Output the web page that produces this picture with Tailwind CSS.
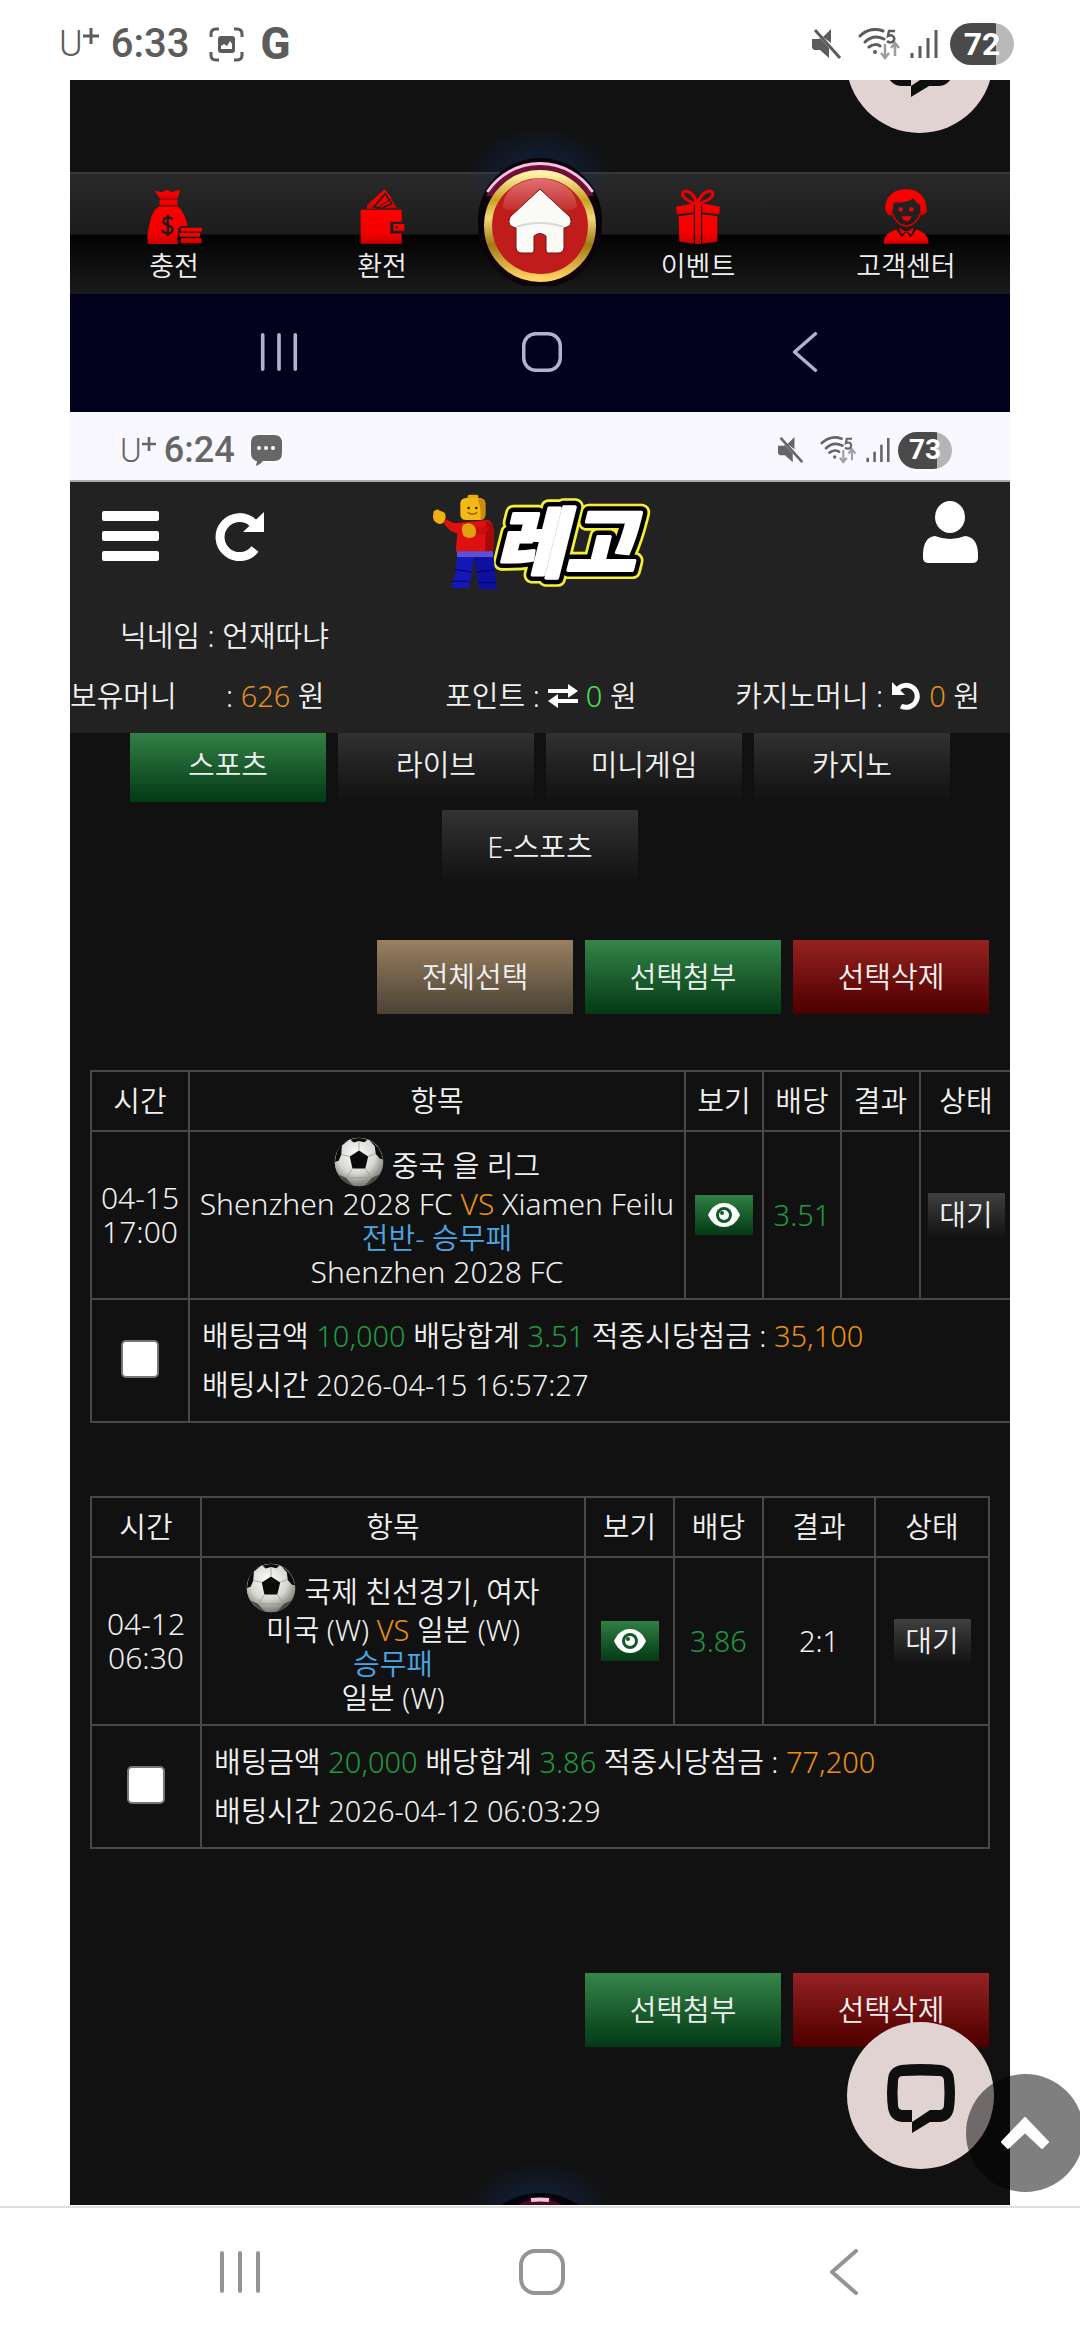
<!DOCTYPE html>
<html lang="ko">
  <head>
    <meta charset="UTF-8" />
    <title>베팅내역</title>
    <meta name="viewport" content="width=device-width, initial-scale=1.0" />
    <script src="https://cdn.jsdelivr.net/npm/@tailwindcss/browser@4"></script>
  </head>
  <body
    class="relative flex min-h-screen flex-col overflow-x-hidden bg-white font-['Noto_Sans','Noto_Sans_CJK_KR',sans-serif]"
  >
    <!-- Shared icons -->
    <svg class="absolute h-0 w-0">
      <defs>
        <linearGradient id="gold" x1="0" y1="0" x2="0" y2="1">
          <stop offset="0" stop-color="#fff3a8" />
          <stop offset="0.25" stop-color="#c9a022" />
          <stop offset="0.42" stop-color="#f3d878" />
          <stop offset="0.68" stop-color="#a07a14" />
          <stop offset="1" stop-color="#ffd162" />
        </linearGradient>
        <linearGradient id="gloss" x1="0" y1="0" x2="0" y2="1">
          <stop offset="0" stop-color="#e27070" />
          <stop offset="1" stop-color="#c33030" />
        </linearGradient>
        <linearGradient id="redIcon" x1="0" y1="0" x2="0" y2="1">
          <stop offset="0" stop-color="#ff0000" />
          <stop offset="0.7" stop-color="#f20000" />
          <stop offset="1" stop-color="#cc0000" />
        </linearGradient>
        <radialGradient id="glow">
          <stop offset="0.4" stop-color="#12306e" stop-opacity="0.9" />
          <stop offset="1" stop-color="#12306e" stop-opacity="0" />
        </radialGradient>
        <radialGradient id="ballShade" cx="0.45" cy="0.35" r="0.65">
          <stop offset="0" stop-color="#ffffff" />
          <stop offset="0.6" stop-color="#d6d6d2" />
          <stop offset="1" stop-color="#77776f" />
        </radialGradient>
      </defs>
      <symbol id="mute" viewBox="0 0 30 30">
        <path d="M0 10h7l1-1L17 19v10L8 21H2L0 19zM11 8L19 0v14z" fill="currentColor" />
        <path d="M3 1L28 29" stroke="currentColor" stroke-width="3" fill="none" />
      </symbol>
      <symbol id="wifi" viewBox="0 0 44 32">
        <g fill="none" stroke="currentColor" stroke-width="3" stroke-linecap="round">
          <path d="M2 8C9 1 18 0 25 3M7 14C13 8 20 8 26 11M11 19C15 16 20 16 22 18" />
        </g>
        <circle cx="17" cy="24" r="2" fill="currentColor" />
        <path d="M37 3H31L30 8C34 6 37 9 36 12C35 15 31 15 29 13" fill="none" stroke="currentColor" stroke-width="2.5" />
        <path d="M27 16V29M23 25L27 30L31 25M37 28V16M33 20L37 15L41 20" fill="none" stroke="currentColor" stroke-width="2.5" opacity="0.6" />
      </symbol>
      <symbol id="signal" viewBox="0 0 28 30">
        <path d="M2 24V29M10 17V29M18 9V29M26 1V29" stroke="currentColor" stroke-width="3" />
      </symbol>
      <symbol id="ball" viewBox="36 24 152 152">
        <circle cx="112" cy="100" r="74" fill="url(#ballShade)" />
        <g fill="#0b0b0b">
          <path d="M112 65L140 83L131 120L92 120L84 83Z" />
          <path d="M86 32Q112 22 138 32L128 40L112 36L96 41Z" />
          <path d="M60 50L80 34L64 42Q42 60 39 100L50 96L58 78Z" />
          <path d="M144 34Q176 50 185 92L176 90L163 76L160 52Z" />
        </g>
        <g fill="#4a4a44">
          <path d="M50 138L72 148L94 172Q66 166 50 138Z" />
          <path d="M174 138L152 148L130 172Q158 166 174 138Z" />
        </g>
        <path
          d="M112 65V37M140 83L163 74M131 120L150 148M92 120L74 148M84 83L58 77M78 148H146"
          fill="none"
          stroke="#8d8d88"
          stroke-width="2"
        />
      </symbol>
      <symbol id="eye" viewBox="0 0 32 24">
        <path d="M0 12C4 3 10 0 16 0S28 3 32 12C28 21 22 24 16 24S4 21 0 12Z" fill="#fff" />
        <circle cx="16" cy="12" r="8" fill="#135a29" />
        <circle cx="16" cy="12" r="5" fill="#fff" />
        <circle cx="14" cy="10" r="2" fill="#135a29" />
      </symbol>
      <symbol id="chat" viewBox="0 0 70 70">
        <path
          d="M15 2Q35 0 55 2Q67 4 68 16Q70 30 68 45Q66 58 54 59H44L26 70V59H16Q4 58 2 45Q0 30 2 16Q3 4 15 2Z"
          fill="#0f0f0f"
        />
        <path d="M17 13Q35 12 53 13Q58 13 58 18Q59 30 58 42Q58 47 53 47H44L26 59V47H17Q12 47 12 42Q11 30 12 18Q12 13 17 13Z" fill="#e1d3d2" />
      </symbol>
      <symbol id="recents" viewBox="0 0 42 44">
        <path d="M3 3V41M21 3V41M39 3V41" stroke="currentColor" stroke-width="4" stroke-linecap="round" />
      </symbol>
      <symbol id="homeKey" viewBox="0 0 46 46">
        <rect x="2" y="2" width="42" height="42" rx="14" fill="none" stroke="currentColor" stroke-width="4" />
      </symbol>
      <symbol id="backKey" viewBox="0 0 30 46">
        <path d="M27 2L3 23L27 44" fill="none" stroke="currentColor" stroke-width="4" stroke-linecap="round" stroke-linejoin="round" />
      </symbol>
    </svg>

    <!-- Phone status bar -->
    <div class="flex h-20 items-center justify-between pt-2 pr-[66px] pl-[59px] font-[Roboto] text-[#5c5c5c]">
      <div class="flex items-center">
        <span class="text-[36px] leading-none font-light">U</span>
        <svg class="mb-4 h-4 w-4" viewBox="0 0 16 16" fill="none" stroke="currentColor" stroke-width="3"><path d="M8 0v16M0 8h16" /></svg>
        <span class="ml-3 text-[40px] leading-none font-medium">6:33</span>
        <svg class="ml-5 h-[35px] w-[35px]" viewBox="0 0 35 35" fill="none" stroke="currentColor" stroke-width="3">
          <path d="M2 10V7q0-5 5-5h3M25 2h3q5 0 5 5v3M33 25v3q0 5-5 5h-3M10 33H7q-5 0-5-5v-3" />
          <path d="M12 9h11q3 0 3 3v11q0 3-3 3H12q-3 0-3-3V12q0-3 3-3z" fill="currentColor" stroke="none" />
          <path d="M12 22v-3l3-2 3 2 3-5 2 3v5z" fill="#fff" stroke="none" />
        </svg>
        <span class="ml-4 text-[44px] leading-none font-extrabold">G</span>
      </div>
      <div class="flex items-center">
        <svg class="h-[30px] w-[30px]"><use href="#mute" /></svg>
        <svg class="ml-4 h-8 w-11"><use href="#wifi" /></svg>
        <svg class="ml-2 h-[30px] w-7"><use href="#signal" /></svg>
        <div
          class="ml-3 flex h-[42px] w-16 items-center justify-center rounded-full bg-linear-to-r from-[#4a4a4a] from-72% to-[#b9b9b9] to-72% text-[32px] leading-none font-bold text-white"
        >
          72
        </div>
      </div>
    </div>

    <main class="flex-1 bg-white px-[70px]">
      <div class="relative h-full overflow-hidden bg-[#111] text-[29px] font-[350] text-[#f0f0f0]">
        <!-- Previous screen: menu bar -->
        <section class="relative overflow-hidden pt-23">
          <button
            class="absolute -top-[94px] right-[17px] flex h-[147px] w-[147px] items-center justify-center rounded-full bg-[#e1d3d2]"
            aria-label="채팅"
          >
            <svg class="mt-1 h-[70px] w-[70px]"><use href="#chat" /></svg>
          </button>
          <nav
            class="flex h-[122px] items-start border-t-2 border-[#383838] bg-[linear-gradient(#292929_0%,#1c1c1c_50%,#020202_51%,#1a1a1a_100%)] text-[27px]"
          >
            <a href="#" class="flex flex-1 flex-col items-center gap-[2px] pt-[15px]">
              <svg class="h-[55px] w-[57px]" viewBox="256 116 170 166" fill="url(#redIcon)">
                <path d="M281 121L302 126L318 119L333 125L358 118L350 146H298Z" />
                <path d="M296 148H350V166H296Z" />
                <path d="M294 169H352Q374 190 380 228H360Q352 232 352 242Q348 268 352 282H262Q254 262 266 222Q272 182 294 169Z" />
                <path d="M360 233H424V244H360zM356 248H418V260H356zM360 265H422V280H360z" />
                <path
                  d="M336 208Q330 200 320 202Q305 206 308 216Q312 224 322 226Q336 230 335 240Q332 252 318 250Q306 248 304 240M321 194V258"
                  fill="none"
                  stroke="#1c1c1c"
                  stroke-width="7"
                />
              </svg>
              충전
            </a>
            <a href="#" class="flex flex-1 flex-col items-center gap-[2px] pt-[15px]">
              <svg class="h-[55px] w-[47px]" viewBox="894 116 140 166" fill="url(#redIcon)">
                <path d="M970 117L918 164L916 176H940L992 143Z" />
                <path d="M972 118L1008 174H945L985 152Z" />
                <path d="M938 170L972 130L992 160L962 174Z" fill="none" stroke="#222" stroke-width="5" />
                <path d="M900 179H1022V215H988V250H1022V281H898V184Z" />
                <path d="M997 222H1030V243H997Z" />
                <circle cx="1007" cy="232" r="4" fill="#300" />
              </svg>
              환전
            </a>
            <a href="#" class="relative h-full w-[108px]" aria-label="홈">
              <svg class="absolute -top-12 left-1/2 h-[160px] w-[200px] -translate-x-1/2" viewBox="-100 -100 200 160">
                <ellipse cx="0" cy="-54" rx="74" ry="46" fill="url(#glow)" opacity="0.35" />
                <circle r="62" fill="#10040a" />
                <circle cy="-6" r="62" fill="#08040a" />
                <path d="M-54 -30A62 62 0 0 1 54 -30L46 -30A54 54 0 0 0 -46 -30Z" fill="#6d1038" />
                <path d="M-52 -35A63 63 0 0 1 52 -35" fill="none" stroke="#f6bfe0" stroke-width="3" stroke-linecap="round" />
                <circle r="52" fill="#c01c1c" stroke="url(#gold)" stroke-width="8" />
                <path d="M-37 -20Q-35 -44 0 -48Q35 -44 37 -20Q34 -14 22 -17Q0 -24 -22 -17Q-36 -14 -37 -20Z" fill="url(#gloss)" />
                <path
                  d="M0 -37L30 -9Q34 0 24 2V22Q23 27 18 27H8Q6 27 6 24V10Q0 5 -6 10V24Q-6 27 -8 27H-18Q-23 27 -24 22V2Q-34 0 -30 -9Z"
                  fill="#fafaf7"
                  stroke="#6a1414"
                  stroke-width="1"
                />
                <path d="M-24 1Q0 -7 24 1" fill="none" stroke="#d8d8d4" stroke-width="2" />
              </svg>
            </a>
            <a href="#" class="flex flex-1 flex-col items-center gap-[2px] pt-[15px]">
              <svg class="h-[55px] w-[46px]" viewBox="408 114 138 168" fill="url(#redIcon)">
                <path
                  d="M474 160Q440 150 430 134Q426 120 442 120Q464 124 474 160Q488 124 510 120Q526 120 522 134Q512 150 474 160"
                  fill="none"
                  stroke="#f00000"
                  stroke-width="9"
                />
                <path d="M410 168L464 158V186L412 192Z" />
                <path d="M490 158L544 168L542 192L490 186Z" />
                <path d="M418 197L464 191V281L420 274Z" />
                <path d="M490 191L536 197V274L490 281Z" />
                <path d="M468 160H486V282H468Z" />
              </svg>
              이벤트
            </a>
            <a href="#" class="flex flex-1 flex-col items-center gap-[2px] pt-[15px]">
              <svg class="h-[55px] w-[46px]" viewBox="1030 116 138 166" fill="url(#redIcon)">
                <path
                  d="M1036 168Q1044 118 1100 117Q1152 118 1160 168Q1166 190 1152 194L1142 196V164Q1128 158 1122 144Q1100 160 1062 156L1056 196Q1036 198 1036 168Z"
                />
                <path d="M1058 190Q1070 226 1100 228Q1130 226 1142 190" fill="none" stroke="#d00000" stroke-width="5" />
                <circle cx="1083" cy="178" r="7" />
                <circle cx="1115" cy="178" r="7" />
                <path d="M1086 198H1116Q1110 214 1100 213Q1090 212 1086 198Z" />
                <path d="M1032 281Q1030 250 1070 238L1086 262L1100 246L1114 262L1130 238Q1168 250 1167 281Z" />
                <path d="M1078 234L1100 246L1122 234L1116 254L1100 242L1086 254Z" />
              </svg>
              고객센터
            </a>
          </nav>
        </section>

        <div class="grid h-[118px] grid-cols-3 place-items-center bg-[#01011e] pr-[74px] pb-[2px] pl-[78px] text-[#b4b2c8]">
          <button aria-label="최근 앱"><svg class="h-10 w-[38px]"><use href="#recents" /></svg></button>
          <button aria-label="홈"><svg class="h-10 w-10"><use href="#homeKey" /></svg></button>
          <button aria-label="뒤로"><svg class="h-10 w-[26px]"><use href="#backKey" /></svg></button>
        </div>

        <!-- Current screen: status bar -->
        <div
          class="flex h-[70px] items-center justify-between border-b-2 border-[#a9adb2] bg-[#f9f8ff] pt-2 pr-[58px] pl-[50px] font-[Roboto] text-[#666]"
        >
          <div class="flex items-center">
            <span class="text-[33px] leading-none font-light">U</span>
            <svg class="mb-3 h-[14px] w-[14px]" viewBox="0 0 16 16" fill="none" stroke="currentColor" stroke-width="3"><path d="M8 0v16M0 8h16" /></svg>
            <span class="ml-2 text-[36px] leading-none font-medium">6:24</span>
            <svg class="ml-4 h-[31px] w-[31px]" viewBox="0 0 31 31" fill="currentColor">
              <path d="M8 0h15q8 0 8 8v10q0 8-8 8h-11q-2 3-7 5l1-5q-6-1-6-8V8q0-8 8-8z" />
              <g fill="#fff">
                <circle cx="8" cy="13" r="2" />
                <circle cx="15" cy="13" r="2" />
                <circle cx="22" cy="13" r="2" />
              </g>
            </svg>
          </div>
          <div class="flex items-center">
            <svg class="h-[26px] w-[26px]"><use href="#mute" /></svg>
            <svg class="ml-4 h-7 w-[38px]"><use href="#wifi" /></svg>
            <svg class="ml-2 h-[26px] w-6"><use href="#signal" /></svg>
            <div
              class="ml-2 flex h-[37px] w-[54px] items-center justify-center rounded-full bg-linear-to-r from-[#4a4a4a] from-72% to-[#b5b5b8] to-72% text-[28px] leading-none font-bold text-white"
            >
              73
            </div>
          </div>
        </div>

        <!-- Site header -->
        <header class="relative z-10 h-[251px] bg-[#222]">
          <div class="flex items-center pt-3 pr-8 pl-8">
            <div class="mb-3 flex flex-1 items-center gap-[56px]">
              <button aria-label="메뉴">
                <svg class="h-[50px] w-[57px]" viewBox="0 0 57 50" fill="#fff">
                  <rect width="57" height="10" rx="2" />
                  <rect y="20" width="57" height="10" rx="2" />
                  <rect y="40" width="57" height="10" rx="2" />
                </svg>
              </button>
              <button aria-label="새로고침">
                <svg class="h-[50px] w-[50px]" viewBox="0 0 50 50" fill="none">
                  <path d="M40 38A19.500 19.500 0 1 1 38 12" stroke="#fff" stroke-width="9" />
                  <path d="M49 1V21H28Z" fill="#fff" />
                </svg>
              </button>
            </div>
            <a href="#" aria-label="레고">
              <svg class="h-[96px] w-[216px] overflow-visible" viewBox="99 42 648 288">
                <g font-family="Noto Sans CJK KR" font-weight="900" font-style="italic" font-size="228" stroke-linejoin="round">
                  <text x="288" y="274" fill="none" stroke="#f2ee3a" stroke-width="52">레고</text>
                  <text x="288" y="274" fill="#000" stroke="#000" stroke-width="36">레고</text>
                  <text x="288" y="274" fill="#fff" stroke="#fff" stroke-width="9">레고</text>
                </g>
                <rect x="206" y="44" width="32" height="20" rx="5" fill="#e9a90c" />
                <rect x="184" y="54" width="75" height="66" rx="16" fill="#f5b915" />
                <path d="M236 56H246Q259 58 259 72V104Q258 118 244 120Q248 90 236 56Z" fill="#d08a08" />
                <circle cx="209" cy="84" r="4" fill="#3a2500" />
                <circle cx="232" cy="84" r="4" fill="#3a2500" />
                <path d="M206 97Q220 108 235 97" fill="none" stroke="#5a3500" stroke-width="3" />
                <path d="M180 128L268 120Q286 130 285 165L282 215H170L175 160Q150 156 132 126L144 118Q158 132 180 128Z" fill="#e01010" />
                <path d="M262 124Q286 130 285 165L282 215H258Z" fill="#a80808" />
                <path d="M272 140Q268 168 222 164L226 144Z" fill="#c90d0d" />
                <path d="M104 94Q116 84 122 92Q140 94 140 110Q138 132 120 132Q100 124 102 108Z" fill="#eeb014" />
                <path d="M192 134Q210 124 224 136Q236 150 228 168Q212 180 194 168Q184 150 192 134Z" fill="#e0a010" />
                <path d="M174 214H282V232H174Z" fill="#5c50d8" />
                <path d="M174 232H224L218 280L210 324H156L168 284Z" fill="#1418b8" />
                <path d="M226 232H284L290 300L296 328H240L234 290Z" fill="#0d10a0" />
                <path d="M168 268L218 276M160 304H212M234 276L288 270M238 308H292" stroke="#060766" stroke-width="4" />
              </svg>
            </a>
            <div class="flex flex-1 justify-end">
              <button aria-label="내 정보">
                <svg class="mb-5 h-[62px] w-[55px]" viewBox="0 0 55 62" fill="#fff">
                  <ellipse cx="27" cy="16" rx="15" ry="16" />
                  <path d="M12 35Q27 41 42 35Q54 36 55 52V57Q55 62 49 62H6Q0 62 0 57V52Q1 36 12 35Z" />
                </svg>
              </button>
            </div>
          </div>
          <p class="mt-[26px] pl-[50px] leading-[40px]">닉네임 : 언재따냐</p>
          <div class="mt-[20px] flex items-center justify-between pr-[30px] leading-10">
            <p class="flex">
              <span class="w-[156px]">보유머니</span>
              <span>: <span class="text-[#e0901e]">626</span> 원</span>
            </p>
            <p class="flex items-center gap-2 pl-[22px]">
              포인트 :
              <svg class="h-6 w-[30px]" viewBox="0 0 30 24" fill="#fff">
                <path d="M0 5H20V0L30 7L20 14V9H0zM30 15H10V10L0 17L10 24V19H30z" />
              </svg>
              <span><span class="text-[#4fe04f]">0</span> 원</span>
            </p>
            <p class="flex items-center gap-2">
              카지노머니 :
              <svg class="h-[30px] w-[30px]" viewBox="0 0 30 30" fill="none">
                <path d="M7 8A11 11 0 1 1 10 25" stroke="#fff" stroke-width="5" />
                <path d="M1 1V14H14Z" fill="#fff" />
              </svg>
              <span><span class="text-[#e0901e]">0</span> 원</span>
            </p>
          </div>
        </header>

        <!-- Category tabs -->
        <div class="-mt-[5px] flex flex-wrap justify-center gap-x-3 gap-y-2 [text-shadow:0_2px_4px_#000]">
          <button class="h-[74px] w-[196px] bg-linear-to-b from-[#35864a] to-[#033a15]">스포츠</button>
          <button class="h-[74px] w-[196px] bg-linear-to-b from-[#333] to-[#111]">라이브</button>
          <button class="h-[74px] w-[196px] bg-linear-to-b from-[#333] to-[#111]">미니게임</button>
          <button class="h-[74px] w-[196px] bg-linear-to-b from-[#333] to-[#111]">카지노</button>
          <button class="h-[74px] w-[196px] bg-linear-to-b from-[#333] to-[#111]">E-스포츠</button>
        </div>

        <div class="mt-14 flex justify-end gap-3 pr-[21px] [text-shadow:0_2px_4px_#000]">
          <button class="h-[74px] w-[196px] bg-linear-to-b from-[#9a8060] to-[#4b4236]">전체선택</button>
          <button class="h-[74px] w-[196px] bg-linear-to-b from-[#35864a] to-[#033a15]">선택첨부</button>
          <button class="h-[74px] w-[196px] bg-linear-to-b from-[#952222] to-[#4d0000]">선택삭제</button>
        </div>

        <!-- Bet 1: wider than the screen, cut at the right edge -->
        <div class="mt-14 overflow-hidden pl-5">
          <table class="w-[923px] table-fixed border-collapse text-center [&_td]:border-2 [&_td]:border-[#484848] [&_th]:border-2 [&_th]:border-[#484848]">
            <colgroup>
              <col class="w-[98px]" />
              <col />
              <col class="w-[78px]" />
              <col class="w-[78px]" />
              <col class="w-[79px]" />
              <col class="w-[92px]" />
            </colgroup>
            <thead>
              <tr class="h-[60px]">
                <th class="font-[350]">시간</th>
                <th class="font-[350]">항목</th>
                <th class="font-[350]">보기</th>
                <th class="font-[350]">배당</th>
                <th class="font-[350]">결과</th>
                <th class="font-[350]">상태</th>
              </tr>
            </thead>
            <tbody>
              <tr class="h-[168px] leading-[34px]">
                <td class="text-[30px]">04-15<br />17:00</td>
                <td class="pb-1 whitespace-nowrap">
                  <div class="flex items-end justify-center gap-2">
                    <svg class="h-[50px] w-[50px]"><use href="#ball" /></svg>
                    <span class="leading-[42px]">중국 을 리그</span>
                  </div>
                  <div class="text-[30px]">Shenzhen 2028 FC <span class="text-[#ea9010]">VS</span> Xiamen Feilu</div>
                  <div class="text-[#4aa6e4]">전반- 승무패</div>
                  <div class="text-[30px]">Shenzhen 2028 FC</div>
                </td>
                <td>
                  <button class="mx-auto flex h-10 w-[58px] items-center justify-center bg-linear-to-b from-[#2f8044] to-[#033a15]" aria-label="보기">
                    <svg class="h-6 w-8"><use href="#eye" /></svg>
                  </button>
                </td>
                <td class="text-[#1f9a41]">3.51</td>
                <td></td>
                <td>
                  <button class="h-11 w-[77px] bg-linear-to-b from-[#404040] to-[#131313]">대기</button>
                </td>
              </tr>
              <tr class="h-[123px]">
                <td>
                  <input
                    type="checkbox"
                    aria-label="04-15 베팅 선택"
                    class="mx-auto mb-1 block h-[38px] w-[38px] appearance-none rounded-[5px] border-2 border-[#767676] bg-white"
                  />
                </td>
                <td colspan="5" class="pb-[2px] pl-3 text-left leading-[49px]">
                  배팅금액 <span class="text-[#1f9a41]">10,000</span> 배당합계 <span class="text-[#1f9a41]">3.51</span> 적중시당첨금 :
                  <span class="text-[#ea9010]">35,100</span><br />
                  배팅시간 2026-04-15 16:57:27
                </td>
              </tr>
            </tbody>
          </table>
        </div>

        <!-- Bet 2 -->
        <div class="mt-[73px] px-5">
          <table class="w-full table-fixed border-collapse text-center [&_td]:border-2 [&_td]:border-[#484848] [&_th]:border-2 [&_th]:border-[#484848]">
            <colgroup>
              <col class="w-[110px]" />
              <col />
              <col class="w-[89px]" />
              <col class="w-[89px]" />
              <col class="w-[112px]" />
              <col class="w-[114px]" />
            </colgroup>
            <thead>
              <tr class="h-[60px]">
                <th class="font-[350]">시간</th>
                <th class="font-[350]">항목</th>
                <th class="font-[350]">보기</th>
                <th class="font-[350]">배당</th>
                <th class="font-[350]">결과</th>
                <th class="font-[350]">상태</th>
              </tr>
            </thead>
            <tbody>
              <tr class="h-[168px] leading-[34px]">
                <td class="text-[30px]">04-12<br />06:30</td>
                <td class="pb-1 whitespace-nowrap">
                  <div class="flex items-end justify-center gap-2">
                    <svg class="h-[50px] w-[50px]"><use href="#ball" /></svg>
                    <span class="leading-[42px]">국제 친선경기, 여자</span>
                  </div>
                  <div>미국 (W) <span class="text-[#ea9010]">VS</span> 일본 (W)</div>
                  <div class="text-[#4aa6e4]">승무패</div>
                  <div>일본 (W)</div>
                </td>
                <td>
                  <button class="mx-auto flex h-10 w-[58px] items-center justify-center bg-linear-to-b from-[#2f8044] to-[#033a15]" aria-label="보기">
                    <svg class="h-6 w-8"><use href="#eye" /></svg>
                  </button>
                </td>
                <td class="text-[#1f9a41]">3.86</td>
                <td>2:1</td>
                <td>
                  <button class="h-11 w-[77px] bg-linear-to-b from-[#404040] to-[#131313]">대기</button>
                </td>
              </tr>
              <tr class="h-[123px]">
                <td>
                  <input
                    type="checkbox"
                    aria-label="04-12 베팅 선택"
                    class="mx-auto mb-1 block h-[38px] w-[38px] appearance-none rounded-[5px] border-2 border-[#767676] bg-white"
                  />
                </td>
                <td colspan="5" class="pb-[2px] pl-3 text-left leading-[49px]">
                  배팅금액 <span class="text-[#1f9a41]">20,000</span> 배당합계 <span class="text-[#1f9a41]">3.86</span> 적중시당첨금 :
                  <span class="text-[#ea9010]">77,200</span><br />
                  배팅시간 2026-04-12 06:03:29
                </td>
              </tr>
            </tbody>
          </table>
        </div>

        <div class="mt-[124px] flex justify-end gap-3 pr-[21px] pb-[158px] [text-shadow:0_2px_4px_#000]">
          <button class="h-[74px] w-[196px] bg-linear-to-b from-[#35864a] to-[#033a15]">선택첨부</button>
          <button class="h-[74px] w-[196px] bg-linear-to-b from-[#952222] to-[#4d0000]">선택삭제</button>
        </div>

        <!-- Floating parts over the list -->
        <button
          class="absolute right-4 bottom-9 flex h-[147px] w-[147px] items-center justify-center rounded-full bg-[#e1d3d2]"
          aria-label="채팅"
        >
          <svg class="mt-1 h-[70px] w-[70px]"><use href="#chat" /></svg>
        </button>
        <svg class="absolute bottom-0 left-1/2 h-12 w-[160px] -translate-x-1/2" viewBox="-80 0 160 48">
          <ellipse cx="0" cy="50" rx="74" ry="46" fill="url(#glow)" opacity="0.35" />
          <circle cy="104" r="68" fill="#05020a" />
          <path d="M-22 48Q0 34 22 48Z" fill="#4a0a24" />
          <path d="M-9 43Q0 42 9 43" fill="none" stroke="#f5c6dc" stroke-width="4" />
        </svg>
      </div>
    </main>

    <!-- Phone navigation keys -->
    <div class="grid h-[134px] grid-cols-3 place-items-center border-t-2 border-[#dedede] pr-[85px] pb-1 pl-[89px] text-[#949494]">
      <button aria-label="최근 앱"><svg class="h-11 w-[42px]"><use href="#recents" /></svg></button>
      <button aria-label="홈"><svg class="h-[46px] w-[46px]"><use href="#homeKey" /></svg></button>
      <button aria-label="뒤로"><svg class="h-[46px] w-[30px]"><use href="#backKey" /></svg></button>
    </div>

    <button
      class="absolute -right-1 bottom-[148px] z-20 flex h-[118px] w-[118px] items-center justify-center rounded-full bg-black/50"
      aria-label="맨 위로"
    >
      <svg class="h-8 w-12" viewBox="0 0 48 32" fill="#fff" stroke="#fff" stroke-width="2" stroke-linejoin="round">
        <path d="M24 1L47 25L41 31L24 15L7 31L1 25Z" />
      </svg>
    </button>
  </body>
</html>
